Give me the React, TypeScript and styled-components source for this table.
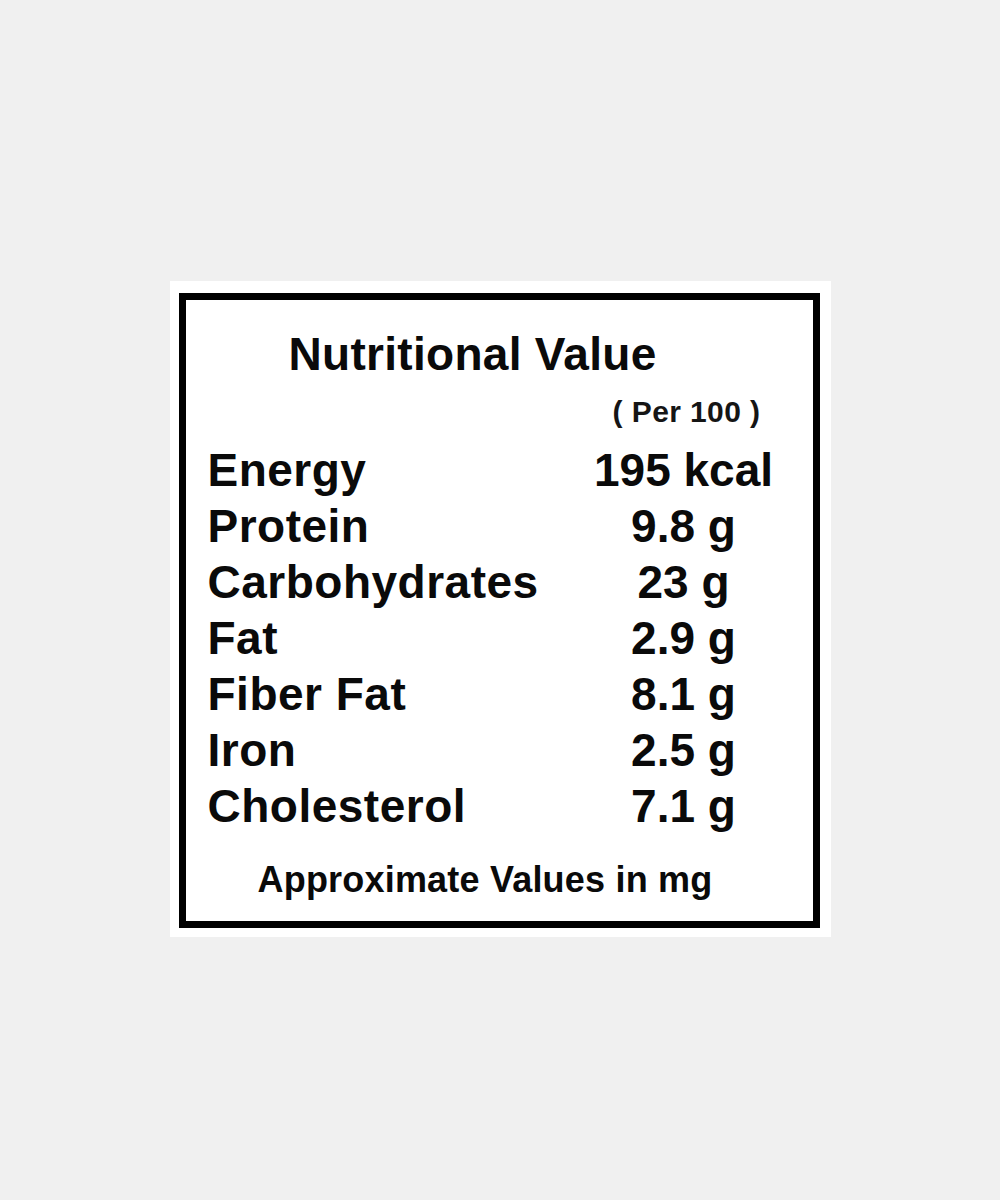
import React from "react";
import styled, { createGlobalStyle } from "styled-components";

const GlobalStyle = createGlobalStyle`
  html, body {
    margin: 0;
    padding: 0;
    background: #f0f0f0;
  }
  body {
    font-family: "Liberation Sans", Arial, Helvetica, sans-serif;
    color: #000;
  }
`;

const Page = styled.div`
  min-height: 1200px;
  box-sizing: border-box;
  display: flex;
  justify-content: center;
  align-items: flex-start;
  padding-top: 281px;
  background: #f0f0f0;
`;

const Card = styled.div`
  background: #ffffff;
  padding: 12px 11px 9px 9px;
`;

const Box = styled.div`
  width: 627px;
  height: 621px;
  border: 7px solid #000;
  box-sizing: content-box;
  display: flex;
  flex-direction: column;
`;

const Title = styled.h1`
  margin: 26px 0 0 0;
  padding-left: 103px;
  font-size: 46px;
  line-height: 56px;
  font-weight: 700;
  letter-spacing: 0.3px;
  color: #0a0a0a;
  white-space: nowrap;
`;

const Table = styled.div`
  display: grid;
  grid-template-columns: 386px 180px;
  padding-left: 22px;
  margin-top: 12px;
`;

const PerCell = styled.div`
  grid-column: 2;
  text-align: center;
  padding-left: 6px;
  font-size: 30px;
  line-height: 36px;
  font-weight: 700;
  letter-spacing: 0.4px;
  color: #151515;
  margin-bottom: 12px;
  white-space: nowrap;
`;

const Label = styled.div`
  grid-column: 1;
  font-size: 46px;
  line-height: 56px;
  font-weight: 700;
  letter-spacing: 0.5px;
  color: #0a0a0a;
  white-space: nowrap;
`;

const Value = styled.div`
  grid-column: 2;
  text-align: center;
  font-size: 46px;
  line-height: 56px;
  font-weight: 700;
  color: #0a0a0a;
  white-space: nowrap;
`;

const Footnote = styled.p`
  margin: 26px 0 0 0;
  padding-left: 72px;
  font-size: 36px;
  line-height: 40px;
  font-weight: 700;
  letter-spacing: 0.2px;
  color: #0a0a0a;
  white-space: nowrap;
`;

const rows: [string, string][] = [
  ["Energy", "195 kcal"],
  ["Protein", "9.8 g"],
  ["Carbohydrates", "23 g"],
  ["Fat", "2.9 g"],
  ["Fiber Fat", "8.1 g"],
  ["Iron", "2.5 g"],
  ["Cholesterol", "7.1 g"],
];

export default function App() {
  return (
    <>
      <GlobalStyle />
      <Page>
        <Card>
          <Box>
            <Title>Nutritional Value</Title>
            <Table>
              <PerCell>( Per 100 )</PerCell>
              {rows.map(([label, value]) => (
                <React.Fragment key={label}>
                  <Label>{label}</Label>
                  <Value>{value}</Value>
                </React.Fragment>
              ))}
            </Table>
            <Footnote>Approximate Values in mg</Footnote>
          </Box>
        </Card>
      </Page>
    </>
  );
}
